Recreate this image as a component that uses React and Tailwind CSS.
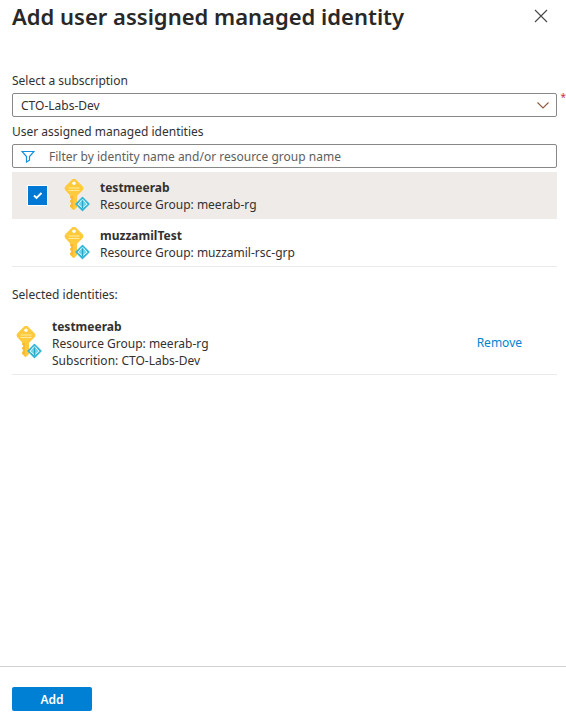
import { useState } from "react";

function KeyIcon() {
  return (
    <svg viewBox="0 0 26 34" className="h-[34px] w-[26px] shrink-0" aria-hidden="true">
      <path
        d="M7.600 1a3.200 3.200 0 0 1 4.800 0l6 6a2.900 2.900 0 0 1 0 4.400L13 16.800V28l-2.700 2.700a1 1 0 0 1-1.400 0L6.300 28v-2l1.300-1.500-1.300-1.400v-1.600L7.600 20l-1.300-1.300v-1.900L1.600 11.400a2.900 2.900 0 0 1 0-4.400z"
        fill="#ffca3c"
      />
      <path d="M6.300 17H9v12.500L6.300 28v-2l1.300-1.500-1.300-1.400v-1.600L7.600 20l-1.300-1.300z" fill="#fdb92f" />
      <circle cx="10" cy="4.200" r="1.700" fill="#fff" />
      <path d="M4.500 9h11M4.500 11.500h11" stroke="#ffe9a0" strokeWidth="1.200" />
      <path d="M18.500 18.500l6.500 6.500-6.500 6.500L12 25z" fill="#32b5d6" stroke="#32b5d6" strokeWidth="1.400" strokeLinejoin="round" />
      <path d="M18.500 20l4.800 5.300-4.800 4.200-4.800-4.200z" fill="#6fd3ea" />
      <path d="M18 20.500l-4 4.800 4 3.200M19 20.500l4 4.800-4 3.200" fill="none" stroke="#e3f9fd" strokeWidth="1" />
      <path d="M18.500 21.500v7.500" stroke="#2aa5c6" strokeWidth="1.300" />
    </svg>
  );
}

function IdentityRow({ name, group, checked, onChange }) {
  return (
    <label
      className={`flex h-[47px] items-center pl-[15px] last:h-[46px] last:pt-px ${checked ? "bg-[#efebe8]" : "bg-white"}`}
    >
      <span className="relative mr-4 flex size-[21px] shrink-0">
        <input
          type="checkbox"
          checked={checked}
          onChange={onChange}
          aria-label={name}
          className="size-full appearance-none border border-white bg-[#0078d4] opacity-0 checked:opacity-100"
        />
        {checked && (
          <svg viewBox="0 0 21 21" className="pointer-events-none absolute inset-0" aria-hidden="true">
            <path d="M7 10.500l2.500 2.500 5-5" fill="none" stroke="#fff" strokeWidth="1.900" />
          </svg>
        )}
      </span>
      <KeyIcon />
      <span className="ml-[10px] flex flex-col leading-[17px]">
        <strong>{name}</strong>
        <span>Resource Group: {group}</span>
      </span>
    </label>
  );
}

export default function App() {
  const [selected, setSelected] = useState(["testmeerab"]);
  const toggle = (name) =>
    setSelected((s) => (s.includes(name) ? s.filter((n) => n !== name) : [...s, name]));
  const identities = [
    { name: "testmeerab", group: "meerab-rg" },
    { name: "muzzamilTest", group: "muzzamil-rsc-grp" },
  ];

  return (
    <div className="flex min-h-screen flex-col bg-white font-['Segoe_UI','Noto_Sans',sans-serif] text-[12px] text-[#323130]">
      <header className="flex h-8 items-center justify-between pr-[18px] pl-3">
        <h1 className="text-[22px] leading-8 font-semibold whitespace-nowrap text-[#292827]">
          Add user assigned managed identity
        </h1>
        <button type="button" aria-label="Close">
          <svg viewBox="0 0 14 14" className="size-[14px]" aria-hidden="true">
            <path d="M1 1l12 12M13 1L1 13" stroke="#484644" strokeWidth="1.100" />
          </svg>
        </button>
      </header>

      <main className="flex grow flex-col pt-[41px] pr-[9px] pl-3">
        <label htmlFor="subscription" className="leading-4">
          Select a subscription
        </label>
        <div className="relative mt-1">
          <select
            id="subscription"
            required
            className="block h-6 w-full appearance-none rounded-[2px] border border-[#8a8886] bg-white px-2 pt-px"
          >
            <option>CTO-Labs-Dev</option>
          </select>
          <svg
            viewBox="0 0 12 7"
            className="pointer-events-none absolute top-[9px] right-2 h-[7px] w-3"
            aria-hidden="true"
          >
            <path d="M0.500 0.500L6 6l5.500-5.500" fill="none" stroke="#8c5a3c" strokeWidth="1.100" />
          </svg>
          <span className="absolute -top-1 -right-[9px] text-[10px] leading-4 text-[#c4314b]">*</span>
        </div>

        <label htmlFor="filter" className="mt-[7px] leading-4">
          User assigned managed identities
        </label>
        <div className="mt-1 flex h-6 items-center rounded-[2px] border border-[#8a8886] px-2">
          <svg viewBox="0 0 14 13" className="h-[13px] w-[14px] shrink-0" aria-hidden="true">
            <path
              d="M1 1.500h12L8.500 6.500v3.700L5.500 12V6.500z"
              fill="none"
              stroke="#1490df"
              strokeWidth="1.200"
            />
          </svg>
          <input
            id="filter"
            type="text"
            placeholder="Filter by identity name and/or resource group name"
            className="ml-[14px] min-w-0 grow bg-transparent pt-px outline-none placeholder:text-[#605e5c]"
          />
        </div>

        <div className="mt-1 flex flex-col gap-px border-b border-[#edebe9]">
          {identities.map((i) => (
            <IdentityRow
              key={i.name}
              name={i.name}
              group={i.group}
              checked={selected.includes(i.name)}
              onChange={() => toggle(i.name)}
            />
          ))}
        </div>

        <h2 className="mt-5 leading-4">Selected identities:</h2>
        <ul className="mt-[9px]">
          {identities
            .filter((i) => selected.includes(i.name))
            .map((i) => (
              <li key={i.name} className="flex h-[63px] items-center border-b border-[#edebe9] pl-1">
                <KeyIcon />
                <div className="ml-[10px] leading-[17px]">
                  <strong className="block">{i.name}</strong>
                  <p>Resource Group: {i.group}</p>
                  <p>Subscrition: CTO-Labs-Dev</p>
                </div>
                <button
                  type="button"
                  onClick={() => toggle(i.name)}
                  className="mr-[35px] ml-auto text-[#0086cf]"
                >
                  Remove
                </button>
              </li>
            ))}
        </ul>
      </main>

      <footer className="border-t border-[#d2d0ce] px-3 pt-5 pb-[5px]">
        <button
          type="button"
          className="block h-6 w-20 rounded-[2px] bg-[#0080d4] pt-px font-semibold text-white"
        >
          Add
        </button>
      </footer>
    </div>
  );
}
